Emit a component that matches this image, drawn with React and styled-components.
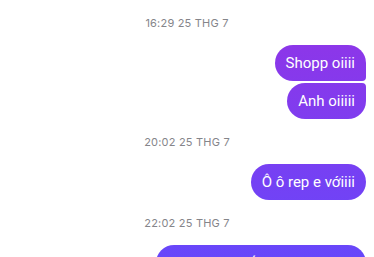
import styled, { createGlobalStyle, css } from "styled-components";

const GlobalStyles = createGlobalStyle`
  html, body {
    margin: 0;
    padding: 0;
    background: #ffffff;
    overflow: hidden;
  }
  body {
    font-family: Roboto, "Noto Sans", "Liberation Sans", sans-serif;
    -webkit-font-smoothing: antialiased;
  }
`;

const Thread = styled.div`
  display: flex;
  flex-direction: column;
  padding: 0 8px;
  height: 257px;
  overflow: hidden;
`;

const Group = styled.section`
  display: flex;
  flex-direction: column;
  align-items: flex-end;
  gap: 2px;
`;

const Stamp = styled.div`
  align-self: stretch;
  text-align: center;
  font-family: Inter, "Noto Sans", sans-serif;
  font-size: 11px;
  line-height: 14px;
  color: #85858a;
  padding: 16px 0 13px;
  letter-spacing: 0.2px;
`;

// messenger style: the gradient is fixed to the viewport, not the bubble
const Bubble = styled.div`
  max-width: 260px;
  padding: 8px 11px;
  font-size: 15px;
  line-height: 20px;
  color: #ffffff;
  white-space: nowrap;
  background: linear-gradient(180deg, #9433e5 0px, #6747fa 257px) fixed;
  border-radius: 18px;

  ${(props) =>
    props.pos === "first" &&
    css`
      border-bottom-right-radius: 4px;
    `};
  ${(props) =>
    props.pos === "last" &&
    css`
      border-top-right-radius: 4px;
    `};
`;

const groups = [
  { time: "16:29 25 THG 7", msgs: ["Shopp oiiii", "Anh oiiiii"] },
  { time: "20:02 25 THG 7", msgs: ["Ô ô rep e vớiiii"] },
  { time: "22:02 25 THG 7", msgs: ["Shop ơi tư vấn giúp em với ạ"] },
];

function pos(i, n) {
  if (n === 1) return "single";
  if (i === 0) return "first";
  if (i === n - 1) return "last";
  return "middle";
}

function App() {
  return (
    <>
      <GlobalStyles />
      <Thread>
        {groups.map((g) => (
          <Group key={g.time}>
            <Stamp>{g.time}</Stamp>
            {g.msgs.map((m, i) => (
              <Bubble key={m} pos={pos(i, g.msgs.length)}>
                {m}
              </Bubble>
            ))}
          </Group>
        ))}
      </Thread>
    </>
  );
}

export default App;
